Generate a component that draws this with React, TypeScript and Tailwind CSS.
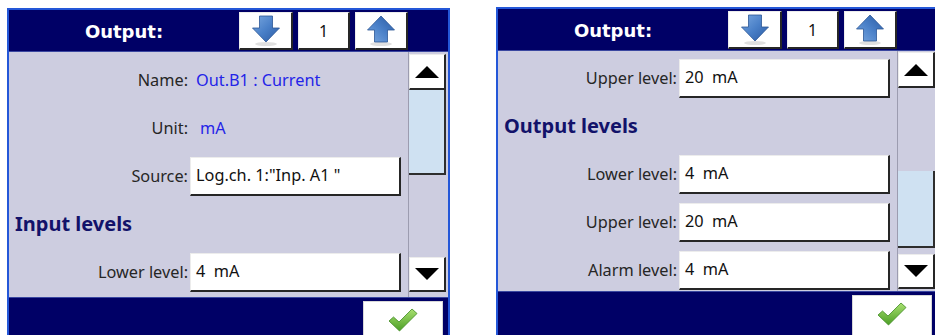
import React from 'react';

type Row =
  | { kind: 'info'; label: string; value: string; valueClass: string }
  | { kind: 'field'; label: string; value: string }
  | { kind: 'heading'; text: string };

const leftRows: Row[] = [
  { kind: 'info', label: 'Name:', value: 'Out.B1 : Current', valueClass: 'pl-[8px]' },
  { kind: 'info', label: 'Unit:', value: 'mA', valueClass: 'pl-[12px]' },
  { kind: 'field', label: 'Source:', value: 'Log.ch. 1:"Inp. A1 "' },
  { kind: 'heading', text: 'Input levels' },
  { kind: 'field', label: 'Lower level:', value: '4  mA' },
];

const rightRows: Row[] = [
  { kind: 'field', label: 'Upper level:', value: '20  mA' },
  { kind: 'heading', text: 'Output levels' },
  { kind: 'field', label: 'Lower level:', value: '4  mA' },
  { kind: 'field', label: 'Upper level:', value: '20  mA' },
  { kind: 'field', label: 'Alarm level:', value: '4  mA' },
];

const sans = "font-['Noto_Sans',sans-serif]";

const ArrowIcon = ({ up = false }: { up?: boolean }) => (
  <svg width="30" height="32" viewBox="0 0 30 32">
    <defs>
      <linearGradient id={up ? 'gu' : 'gd'} x1="0" y1="0" x2="1" y2="1">
        <stop offset="0" stopColor="#7aa8e0" />
        <stop offset="0.5" stopColor="#4a80c8" />
        <stop offset="1" stopColor="#2a5aa2" />
      </linearGradient>
    </defs>
    <ellipse cx="15" cy="29" rx="11" ry="2" fill="#000" opacity="0.12" />
    <g transform={up ? 'translate(0 28) scale(1 -1)' : undefined}>
      <polygon
        points="8.5,1 21.5,1 21.5,13 28.5,13 15,27 1.5,13 8.5,13"
        fill={`url(#${up ? 'gu' : 'gd'})`}
        stroke="#2c5796"
        strokeWidth="0.8"
        strokeLinejoin="round"
      />
    </g>
  </svg>
);

const CheckIcon = () => (
  <svg width="30" height="24" viewBox="0 0 30 24">
    <defs>
      <linearGradient id="gc" x1="0" y1="0" x2="0" y2="1">
        <stop offset="0" stopColor="#a8e070" />
        <stop offset="1" stopColor="#4c9e26" />
      </linearGradient>
    </defs>
    <path
      d="M1 13 L5.5 9 L11 14 L24 1 L29 5.5 L11.5 23 Z"
      fill="url(#gc)"
      stroke="#3f8a22"
      strokeWidth="0.8"
      strokeLinejoin="round"
    />
  </svg>
);

const Triangle = ({ up = false }: { up?: boolean }) => (
  <svg width="24" height="12" viewBox="0 0 24 12">
    <polygon points={up ? '12,0 24,12 0,12' : '0,0 24,0 12,12'} fill="#000" />
  </svg>
);

const raised =
  'bg-white border-t border-l border-t-[#ececec] border-l-[#ececec] border-r-2 border-b-2 border-r-[#262626] border-b-[#262626]';

interface PanelProps {
  rows: Row[];
  className: string;
  contentH: string;
  listPad: string;
  thumb: string;
  scrollPad: string;
}

const Panel = ({ rows, className, contentH, listPad, thumb, scrollPad }: PanelProps) => (
  <div className={`w-[443px] shrink-0 border-2 border-b-0 border-[#2457d8] bg-[#000066] flex flex-col ${className}`}>
    {/* header */}
    <div className="h-[42px] flex items-start border-b border-[#3a47a0]">
      <div className="w-[230px] h-[40px] pt-[3px] flex items-center justify-center">
        <span className="font-['DejaVu_Sans',sans-serif] font-bold text-[18px] text-white">Output:</span>
      </div>
      <div className="flex gap-[5px] pt-[2px]">
        <div className={`w-[54px] h-[38px] flex items-center justify-center ${raised}`}>
          <ArrowIcon />
        </div>
        <div className={`w-[52px] h-[38px] flex items-center justify-center ${raised} ${sans} text-[16px] text-[#111]`}>
          1
        </div>
        <div className={`w-[53px] h-[38px] flex items-center justify-center ${raised}`}>
          <ArrowIcon up />
        </div>
      </div>
    </div>

    {/* content */}
    <div className={`flex bg-[#cdcde0] ${contentH}`}>
      <div className={`w-[399px] ${listPad} ${sans}`}>
        {rows.map((row, i) => {
          if (row.kind === 'heading') {
            return (
              <div key={i} className="h-[48px] flex items-center pl-[6px] text-[20px] font-bold text-[#12126a]">
                {row.text}
              </div>
            );
          }
          return (
            <div key={i} className="h-[48px] flex items-center text-[16.3px]">
              <span className="w-[179px] text-right text-[#262626] whitespace-pre">{row.label}</span>
              {row.kind === 'info' ? (
                <span className={`text-[#2424e8] whitespace-pre ${row.valueClass}`}>{row.value}</span>
              ) : (
                <div className={`ml-[2px] w-[211px] h-[39px] flex items-center pl-[5px] text-[#111] whitespace-pre ${raised}`}>
                  {row.value}
                </div>
              )}
            </div>
          );
        })}
      </div>

      {/* scroll bar */}
      <div className={`w-[38px] flex flex-col border-l border-[#9c9cb0] ${scrollPad}`}>
        <div className={`h-[36px] flex items-center justify-center ${raised}`}>
          <Triangle up />
        </div>
        <div className="flex-1">
          <div className={`bg-[#cfe1f2] border-r-2 border-b-2 border-[#2e2e2e] ${thumb}`} />
        </div>
        <div className={`h-[35px] flex items-center justify-center ${raised}`}>
          <Triangle />
        </div>
      </div>
      <div className="w-[2px]" />
    </div>

    {/* footer */}
    <div className="h-[50px] border-t border-[#3a47a0] flex justify-end pr-[5px] pt-[3px]">
      <div className="w-[80px] h-[42px] bg-white border border-[#d8d8d8] flex items-center justify-center pb-[4px]">
        <CheckIcon />
      </div>
    </div>
  </div>
);

export default function App() {
  return (
    <div className="w-[935px] h-[335px] overflow-hidden bg-white flex items-start">
      <Panel
        rows={leftRows}
        className="ml-[7px] mt-[8px]"
        contentH="h-[245px]"
        listPad="pt-[4px]"
        thumb="mt-0 h-[85px]"
        scrollPad="pt-[2px] pb-[5px]"
      />
      <Panel
        rows={rightRows}
        className="ml-[46px] mt-[7px]"
        contentH="h-[240px]"
        listPad="pt-[3px]"
        thumb="mt-[83px] h-[77px]"
        scrollPad="pt-[1px] pb-[2px]"
      />
    </div>
  );
}
